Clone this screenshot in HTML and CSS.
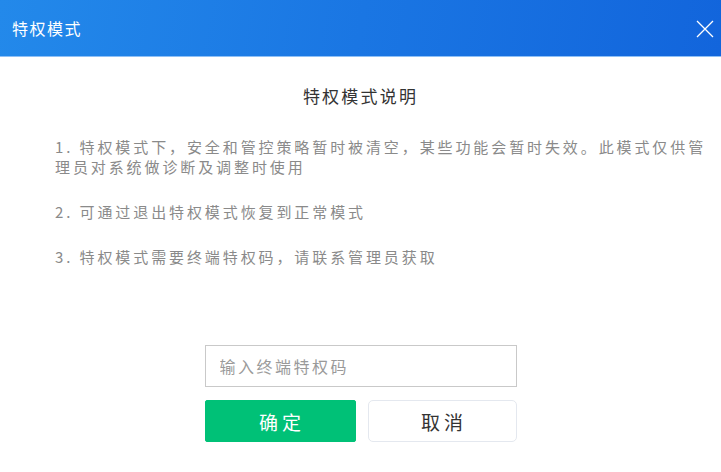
FILE: index.html
```html
<!DOCTYPE html>
<html lang="zh-CN">
<head>
    <meta charset="UTF-8">
    <title>特权模式</title>
    <link rel="stylesheet" href="styles.css">
</head>
<body>
    <div class="dialogo">
        <div class="cabecalho">
            <span class="titulo">特权模式</span>
            <span class="fechar">
                <svg width="18" height="18" viewBox="0 0 18 18">
                    <path d="M1 1 L17 17 M17 1 L1 17" stroke="#ffffff" stroke-width="1.3" fill="none"/>
                </svg>
            </span>
        </div>
        <div class="conteudo">
            <h2>特权模式说明</h2>
            <p>1. 特权模式下，安全和管控策略暂时被清空，某些功能会暂时失效。此模式仅供管理员对系统做诊断及调整时使用</p>
            <p>2. 可通过退出特权模式恢复到正常模式</p>
            <p>3. 特权模式需要终端特权码，请联系管理员获取</p>
        </div>
        <form class="formulario">
            <input type="text" placeholder="输入终端特权码">
            <div class="botoes">
                <button type="submit" class="confirmar">确定</button>
                <button type="button" class="cancelar">取消</button>
            </div>
        </form>
    </div>
</body>
</html>
```

FILE: styles.css
```css
body {
    margin: 0;
    padding: 0;
    font-family: "Noto Sans CJK SC", "Noto Sans", sans-serif;
    background-color: #ffffff;
}
.dialogo {
    width: 721px;
    height: 472px;
    background-color: #ffffff;
}
.cabecalho {
    height: 56px;
    display: flex;
    align-items: center;
    justify-content: space-between;
    padding: 0 7px 0 12px;
    background: linear-gradient(100deg, #2389ea 0%, #1a76e3 50%, #1265dc 100%);
    border-bottom: 1px solid #8ec0f6;
}
.titulo {
    color: #ffffff;
    font-size: 16px;
    letter-spacing: 1.5px;
}
.fechar {
    display: flex;
    margin-top: 1px;
}
.conteudo {
    padding: 0 9px 0 55px;
}
h2 {
    margin: 27px 0 29px 0;
    font-size: 17px;
    font-weight: normal;
    line-height: 24px;
    color: #333333;
    text-align: center;
    letter-spacing: 2.2px;
    padding-right: 46px;
}
p {
    margin: 0 0 25px 0;
    font-size: 15px;
    line-height: 20px;
    color: #8a8a8a;
    letter-spacing: 2.9px;
}
.formulario {
    width: 312px;
    margin: 78px auto 0 auto;
}
input {
    display: block;
    width: 100%;
    height: 42px;
    box-sizing: border-box;
    padding: 0 14px;
    border: 1px solid #c9c9c9;
    font-family: inherit;
    font-size: 16px;
    letter-spacing: 2.5px;
    color: #333333;
    outline: none;
}
input::placeholder {
    color: #9a9a9a;
}
.botoes {
    display: grid;
    grid-template-columns: 151px 1fr;
    gap: 12px;
    margin-top: 13px;
}
button {
    height: 42px;
    font-family: inherit;
    font-size: 19px;
    letter-spacing: 4px;
    cursor: pointer;
    padding: 0 0 0 4px;
}
.confirmar {
    background-color: #00c177;
    color: #ffffff;
    border: 1px solid #00c177;
    border-radius: 2px;
}
.cancelar {
    background-color: #ffffff;
    color: #333333;
    border: 1px solid #e4e8ef;
    border-radius: 5px;
}
```
